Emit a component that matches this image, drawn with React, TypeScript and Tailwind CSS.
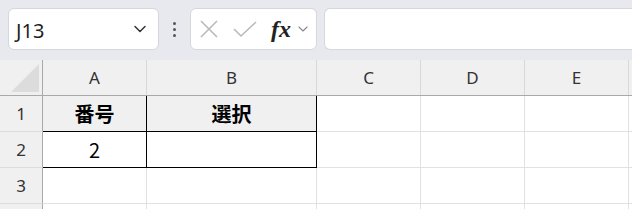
import { ChevronDown } from "lucide-react";

const cols = [
  { label: "A", w: "w-[104px]" },
  { label: "B", w: "w-[170px]" },
  { label: "C", w: "w-[104px]" },
  { label: "D", w: "w-[104px]" },
  { label: "E", w: "w-[104px]" },
  { label: "", w: "w-[60px]" },
];

const hdrFont = { fontFamily: '"Noto Sans", "Open Sans", sans-serif' };
const cellFont = { fontFamily: '"Noto Sans CJK JP", "Noto Sans", sans-serif' };

function FormulaBar() {
  return (
    <div className="flex h-[60px] items-start bg-[#e7e9ee] pt-[8px]">
      {/* Name box */}
      <div className="ml-[8px] flex h-[42px] w-[151px] items-center justify-between rounded-[6px] border border-[#d6d7db] bg-white pl-[7px] pr-[8px]">
        <span className="mt-[3px] text-[20px] text-[#1f1f1f]" style={hdrFont}>
          J13
        </span>
        <ChevronDown size={20} strokeWidth={1.8} className="text-[#333]" />
      </div>

      {/* vertical dots */}
      <div className="flex h-[42px] w-[31px] flex-col items-center justify-center gap-[3px]">
        <span className="h-[3px] w-[3px] rounded-full bg-[#555]" />
        <span className="h-[3px] w-[3px] rounded-full bg-[#555]" />
        <span className="h-[3px] w-[3px] rounded-full bg-[#555]" />
      </div>

      {/* cancel / enter / fx */}
      <div className="flex h-[42px] w-[127px] items-center rounded-[6px] border border-[#d6d7db] bg-white pl-[8px]">
        <svg width="20" height="20" viewBox="0 0 20 20" className="mr-[14px]">
          <path d="M2 2 L18 18 M18 2 L2 18" stroke="#b9b9b9" strokeWidth="1.6" fill="none" />
        </svg>
        <svg width="24" height="20" viewBox="0 0 24 20" className="mr-[14px]">
          <path d="M1 10 L8 17 L23 3" stroke="#b9b9b9" strokeWidth="1.6" fill="none" />
        </svg>
        <span
          className="text-[24px] font-bold italic leading-none text-[#222]"
          style={{ fontFamily: '"Liberation Serif", "DejaVu Serif", serif' }}
        >
          fx
        </span>
        <ChevronDown size={16} strokeWidth={1.6} className="ml-[4px] text-[#888]" />
      </div>

      {/* formula input */}
      <div className="ml-[7px] h-[42px] flex-1 rounded-l-[6px] border border-r-0 border-[#d6d7db] bg-white" />
    </div>
  );
}

function Sheet() {
  const rows = [
    { n: "1", a: "番号", b: "選択", head: true },
    { n: "2", a: "2", b: "", head: false },
    { n: "3", a: "", b: "", head: false },
    { n: "", a: "", b: "", head: false },
  ];

  return (
    <div className="bg-white">
      {/* column header */}
      <div className="flex h-[36px] border-b-[1.5px] border-[#a9a9a9] bg-[#f0f0f0]">
        <div className="flex w-[43px] shrink-0 items-end justify-end border-r border-[#a9a9a9] pb-[3px] pr-[3px]">
          <svg width="28" height="28" viewBox="0 0 28 28">
            <path d="M0 28 L28 28 L28 0 Z" fill="#dcdcdc" />
          </svg>
        </div>
        {cols.map((c, i) => (
          <div
            key={i}
            className={`${c.w} flex shrink-0 items-center justify-center border-r border-[#d8d8d8] text-[17px] text-[#333]`}
            style={hdrFont}
          >
            {c.label}
          </div>
        ))}
      </div>

      {rows.map((r, ri) => {
        const boxed = ri < 2;
        return (
          <div key={ri} className="flex h-[36px]">
            <div
              className="flex w-[43px] shrink-0 items-center justify-center border-r border-b border-r-[#a9a9a9] border-b-[#dcdcdc] bg-[#f0f0f0] text-[17px] text-[#333]"
              style={hdrFont}
            >
              {r.n}
            </div>
            <div
              className={`flex w-[104px] shrink-0 items-center justify-center border-r border-b text-[20px] text-black ${
                boxed ? "border-black" : "border-[#e1e1e1]"
              } ${r.head ? "bg-[#f0f0f0] font-bold" : ""}`}
              style={cellFont}
            >
              {r.a}
            </div>
            <div
              className={`flex w-[170px] shrink-0 items-center justify-center border-r border-b text-[20px] text-black ${
                boxed ? "border-black" : "border-[#e1e1e1]"
              } ${r.head ? "bg-[#f0f0f0] font-bold" : ""}`}
              style={cellFont}
            >
              {r.b}
            </div>
            {cols.slice(2).map((c, i) => (
              <div key={i} className={`${c.w} shrink-0 border-r border-b border-[#e1e1e1]`} />
            ))}
          </div>
        );
      })}
    </div>
  );
}

export default function App() {
  return (
    <div className="h-[209px] w-[632px] overflow-hidden bg-white">
      <FormulaBar />
      <Sheet />
    </div>
  );
}
